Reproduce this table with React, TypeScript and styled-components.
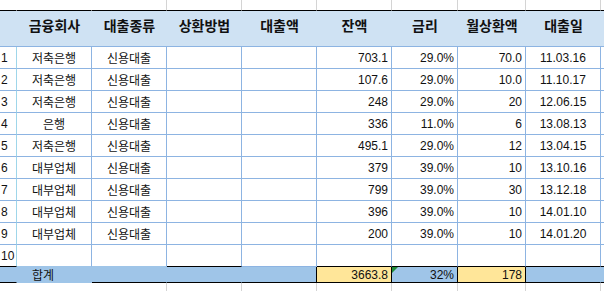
import React from "react";
import styled, { createGlobalStyle, css } from "styled-components";

const Global = createGlobalStyle`
  html, body { margin: 0; padding: 0; background: #ffffff; }
  body { font-family: "Liberation Sans", "Noto Sans CJK KR", sans-serif; }
`;

const GRID = "#8db4e2";
const HEAD_BG = "#cfe2f3";
const TOTAL_BG = "#9fc5e8";
const YELLOW = "#ffe699";

const Sheet = styled.div`
  display: grid;
  grid-template-columns: 17px 75px 75px 75px 75px 75px 66px 68px 75px 1fr;
  grid-template-rows: 11px 36px repeat(10, 22px) 16px 1fr;
  width: 604px;
  height: 291px;
  overflow: hidden;
`;

const TopCell = styled.div<{ $line: boolean }>`
  box-sizing: border-box;
  border-bottom: 1px solid #000;
  border-right: 1px solid ${(p) => (p.$line ? "#d4d4d4" : "transparent")};
`;

const HeaderCell = styled.div`
  box-sizing: border-box;
  background: ${HEAD_BG};
  border-bottom: 1px solid ${GRID};
  display: flex;
  justify-content: center;
  align-items: flex-start;
  padding-top: 4px;
  line-height: 20px;
  font-family: "Noto Sans CJK KR", sans-serif;
  font-weight: 700;
  font-size: 14px;
  color: #111;
  white-space: nowrap;
`;

const bottomLine = css<{ $strong?: boolean; $soft?: boolean }>`
  border-bottom: 1px solid
    ${(p) => (p.$strong ? "#000" : p.$soft ? TOTAL_BG : GRID)};
`;

const RowNum = styled.div<{ $strong?: boolean }>`
  box-sizing: border-box;
  background: #fff;
  border-right: 1px solid #9fd6ea;
  ${bottomLine};
  display: flex;
  align-items: center;
  padding-left: 1px;
  font-size: 12px;
  color: #111;
`;

const DataCell = styled.div<{
  $align: "left" | "center" | "right";
  $strong?: boolean;
  $soft?: boolean;
  $kr?: boolean;
  $noRight?: boolean;
}>`
  box-sizing: border-box;
  background: #fff;
  border-right: 1px solid ${(p) => (p.$noRight ? "transparent" : GRID)};
  ${bottomLine};
  display: flex;
  align-items: center;
  justify-content: ${(p) =>
    p.$align === "right" ? "flex-end" : p.$align === "center" ? "center" : "flex-start"};
  padding: 0 3px;
  font-family: ${(p) =>
    p.$kr ? `"Noto Sans CJK KR", sans-serif` : `"Liberation Sans", "Noto Sans CJK KR", sans-serif`};
  font-size: 12px;
  color: #111;
  white-space: nowrap;
`;

const TotalCell = styled.div<{
  $bg: "blue" | "yellow";
  $right: boolean;
  $bottom: boolean;
  $align?: "left" | "right";
}>`
  position: relative;
  box-sizing: border-box;
  background: ${(p) => (p.$bg === "yellow" ? YELLOW : TOTAL_BG)};
  border-right: 1px solid ${(p) => (p.$right ? "#000" : "transparent")};
  border-bottom: 1px solid ${(p) => (p.$bottom ? "#000" : TOTAL_BG)};
  display: flex;
  align-items: center;
  justify-content: ${(p) => (p.$align === "left" ? "flex-start" : "flex-end")};
  padding: 0 3px;
  font-family: "Liberation Sans", "Noto Sans CJK KR", sans-serif;
  font-size: 12px;
  color: #111;
  white-space: nowrap;
`;

const TotalLabel = styled.span`
  padding-left: 12px;
  font-family: "Noto Sans CJK KR", sans-serif;
`;

const ErrorMark = styled.span`
  position: absolute;
  left: 0;
  top: 0;
  width: 0;
  height: 0;
  border-top: 6px solid #1e8c3a;
  border-right: 6px solid transparent;
`;

const BottomCell = styled.div<{ $line: boolean }>`
  box-sizing: border-box;
  border-right: 1px solid ${(p) => (p.$line ? "#d4d4d4" : "transparent")};
`;

const headers = ["", "금융회사", "대출종류", "상환방법", "대출액", "잔액", "금리", "월상환액", "대출일", ""];

const rows: string[][] = [
  ["저축은행", "신용대출", "", "", "703.1", "29.0%", "70.0", "11.03.16"],
  ["저축은행", "신용대출", "", "", "107.6", "29.0%", "10.0", "11.10.17"],
  ["저축은행", "신용대출", "", "", "248", "29.0%", "20", "12.06.15"],
  ["은행", "신용대출", "", "", "336", "11.0%", "6", "13.08.13"],
  ["저축은행", "신용대출", "", "", "495.1", "29.0%", "12", "13.04.15"],
  ["대부업체", "신용대출", "", "", "379", "39.0%", "10", "13.10.16"],
  ["대부업체", "신용대출", "", "", "799", "39.0%", "30", "13.12.18"],
  ["대부업체", "신용대출", "", "", "396", "39.0%", "10", "14.01.10"],
  ["대부업체", "신용대출", "", "", "200", "39.0%", "10", "14.01.20"],
  ["", "", "", "", "", "", "", ""],
];

const aligns: ("left" | "center" | "right")[] = [
  "center", "center", "center", "right", "right", "right", "right", "center",
];

const strongLast = new Set([0, 3, 5, 6, 7, 8, 9]);
const softLast = new Set([1, 2]);
const topLines = new Set([2, 3, 4, 5, 6, 7, 8]);

type TotalSpec = {
  bg: "blue" | "yellow";
  right: boolean;
  bottom: boolean;
  content?: React.ReactNode;
  align?: "left" | "right";
};

const totals: TotalSpec[] = [
  { bg: "blue", right: false, bottom: true },
  { bg: "blue", right: false, bottom: false, align: "left", content: <TotalLabel>합계</TotalLabel> },
  { bg: "blue", right: false, bottom: true },
  { bg: "blue", right: false, bottom: true },
  { bg: "blue", right: true, bottom: true },
  { bg: "yellow", right: true, bottom: true, content: "3663.8" },
  {
    bg: "blue",
    right: true,
    bottom: true,
    content: (
      <>
        <ErrorMark />
        32%
      </>
    ),
  },
  { bg: "yellow", right: true, bottom: true, content: "178" },
  { bg: "blue", right: false, bottom: true },
  { bg: "blue", right: false, bottom: true },
];

export default function App() {
  return (
    <>
      <Global />
      <Sheet>
        {headers.map((_, i) => (
          <TopCell key={`t${i}`} $line={topLines.has(i)} />
        ))}
        {headers.map((h, i) => (
          <HeaderCell key={`h${i}`}>{h}</HeaderCell>
        ))}
        {rows.map((r, ri) => {
          const last = ri === rows.length - 1;
          return (
            <React.Fragment key={`r${ri}`}>
              <RowNum $strong={last && strongLast.has(0)}>{ri + 1}</RowNum>
              {r.map((v, ci) => (
                <DataCell
                  key={`c${ci}`}
                  $align={aligns[ci]}
                  $kr={ci < 2}
                  $strong={last && strongLast.has(ci + 1)}
                  $soft={last && softLast.has(ci + 1)}
                >
                  {v}
                </DataCell>
              ))}
              <DataCell $align="left" $noRight $strong={last && strongLast.has(9)} />
            </React.Fragment>
          );
        })}
        {totals.map((t, i) => (
          <TotalCell key={`s${i}`} $bg={t.bg} $right={t.right} $bottom={t.bottom} $align={t.align}>
            {t.content}
          </TotalCell>
        ))}
        {headers.map((_, i) => (
          <BottomCell key={`b${i}`} $line={topLines.has(i)} />
        ))}
      </Sheet>
    </>
  );
}
